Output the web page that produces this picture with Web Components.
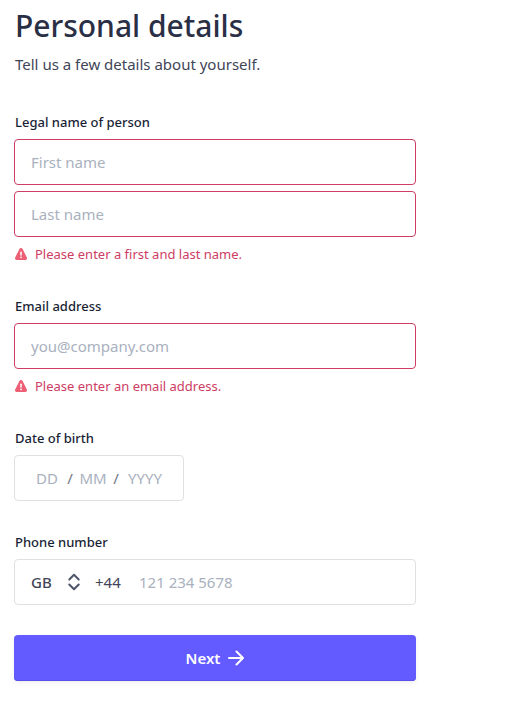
<!DOCTYPE html>
<html lang="en">
<head>
<meta charset="utf-8">
<meta name="viewport" content="width=device-width, initial-scale=1">
<title>Personal details</title>
<style>
  body {
    margin: 0;
    background: #fff;
    font-family: "Noto Sans", "Open Sans", sans-serif;
    --ink: #1a1f36;
    --text: #414558;
    --placeholder: #a9b1be;
    --line: #e0e0e3;
    --error: #cd3d64;
    --accent: #635bff;
  }
</style>
</head>
<body>
<details-page>
  <page-heading>
    Personal details
    <span slot="intro">Tell us a few details about yourself.</span>
  </page-heading>
  <text-field label="Legal name of person" placeholders="First name|Last name" type="text">
    <field-error slot="error">Please enter a first and last name.</field-error>
  </text-field>
  <text-field label="Email address" placeholders="you@company.com" type="email">
    <field-error slot="error">Please enter an email address.</field-error>
  </text-field>
  <date-field label="Date of birth"></date-field>
  <phone-field label="Phone number"></phone-field>
  <next-button>Next</next-button>
</details-page>

<script>
const fieldStyles = `
  :host { display: block; }
  * { box-sizing: border-box; }
  label { display: block; margin-bottom: 7px; padding-left: 1px; font-size: 13px; line-height: 20px; font-weight: 500; color: var(--ink); }
  input, select { font: inherit; font-size: 15px; line-height: 24px; color: var(--text); border: 0; background: none; margin: 0; padding: 0; min-width: 0; outline: 0; }
  input::placeholder { color: var(--placeholder); opacity: 1; }
  .box { display: flex; align-items: center; height: 46px; border: 1px solid var(--line); border-radius: 4px; padding: 0 16px; }
  .box:focus-within { box-shadow: 0 0 0 3px #635bff33; }
`;

class ShadowElement extends HTMLElement {
  connectedCallback() {
    if (this.shadowRoot) return;
    this.attachShadow({ mode: "open" }).innerHTML = this.render();
  }
}

customElements.define("details-page", class extends ShadowElement {
  render() {
    return `<style>
      :host { display: block; padding: 6px 14px 40px; }
      form { display: flex; flex-direction: column; gap: 31px; max-width: 402px; }
    </style><form novalidate><slot></slot></form>`;
  }
});

customElements.define("page-heading", class extends ShadowElement {
  render() {
    return `<style>
      :host { display: block; padding: 0 0 5px 1px; }
      h1 { margin: 0 0 6px; font-size: 30px; line-height: 40px; font-weight: 500; color: #2a2f45; }
      p { margin: 0; font-size: 15px; line-height: 24px; color: var(--text); }
    </style><h1><slot></slot></h1><p><slot name="intro"></slot></p>`;
  }
});

customElements.define("text-field", class extends ShadowElement {
  render() {
    const inputs = this.getAttribute("placeholders").split("|").map((p, i) =>
      `<div class="box"><input ${i ? `aria-label="${p}"` : 'id="control"'} type="${this.getAttribute("type")}" placeholder="${p}" aria-invalid="true"></div>`).join("");
    return `<style>${fieldStyles}
      .stack { display: grid; gap: 6px; }
      .box { border-color: var(--error); }
      input { flex: 1; }
    </style><label for="control">${this.getAttribute("label")}</label>
    <div class="stack">${inputs}<slot name="error"></slot></div>`;
  }
});

customElements.define("field-error", class extends ShadowElement {
  render() {
    return `<style>
      :host { display: flex; align-items: center; gap: 8px; padding-left: 1px; font-size: 13px; line-height: 22px; color: var(--error); }
      svg { flex: none; }
    </style><svg width="12" height="12" viewBox="0 0 12 12" aria-hidden="true">
      <path d="M4.400 1a1.800 1.800 0 0 1 3.200 0l4.200 8.500A1.700 1.700 0 0 1 10.300 12H1.700A1.700 1.700 0 0 1 .2 9.500z" fill="#ed5f74"/>
      <path d="M6 4.200v2.800" stroke="#fff" stroke-width="1.500" stroke-linecap="round"/><circle cx="6" cy="9.300" r=".9" fill="#fff"/>
    </svg><span role="alert"><slot></slot></span>`;
  }
});

customElements.define("date-field", class extends ShadowElement {
  render() {
    return `<style>${fieldStyles}
      .box { display: inline-flex; vertical-align: top; padding: 0 14px; color: #6f7686; font-size: 15px; }
      input { text-align: center; }
      .day, .month { width: 36px; }
      .year { width: 48px; }
      span { width: 10px; text-align: center; }
    </style><label for="day">${this.getAttribute("label")}</label>
    <div class="box"><input class="day" id="day" inputmode="numeric" maxlength="2" placeholder="DD"><span>/</span><input class="month" aria-label="Month" inputmode="numeric" maxlength="2" placeholder="MM"><span>/</span><input class="year" aria-label="Year" inputmode="numeric" maxlength="4" placeholder="YYYY"></div>`;
  }
});

customElements.define("phone-field", class extends ShadowElement {
  render() {
    return `<style>${fieldStyles}
      .country { display: grid; align-items: center; width: 49px; margin-right: 15px; }
      select, svg { grid-area: 1 / 1; }
      select { appearance: none; width: 100%; font-weight: 500; }
      svg { justify-self: end; pointer-events: none; }
      .code { width: 44px; font-size: 15px; line-height: 24px; color: var(--text); }
      #phone { flex: 1; }
    </style><label for="phone">${this.getAttribute("label")}</label>
    <div class="box">
      <div class="country"><select aria-label="Country"><option>GB</option></select>
        <svg width="12" height="18" viewBox="0 0 12 18" fill="none" stroke="#4f566b" stroke-width="2" stroke-linecap="round" stroke-linejoin="round" aria-hidden="true"><path d="M1.300 6.500 6 1.800l4.700 4.700M1.300 11.500 6 16.200l4.700-4.700"/></svg></div>
      <span class="code">+44</span>
      <input id="phone" type="tel" placeholder="121 234 5678">
    </div>`;
  }
});

customElements.define("next-button", class extends ShadowElement {
  render() {
    return `<style>
      :host { display: block; margin-top: -1px; }
      button { display: flex; align-items: center; justify-content: center; gap: 8px; width: 100%; height: 46px; border: 0; border-radius: 4px; background: var(--accent); color: #fff; font: inherit; font-size: 15px; line-height: 24px; font-weight: 600; box-shadow: inset 0 -1px #574fe6, 0 2px 4px #3c425714; cursor: pointer; }
    </style><button type="button"><slot></slot>
      <svg width="16" height="16" viewBox="0 0 16 16" fill="none" stroke="#fff" stroke-width="2" stroke-linecap="round" stroke-linejoin="round" aria-hidden="true"><path d="M1 8h14M8.500 1.500 15 8l-6.500 6.500"/></svg></button>`;
  }
});
</script>
</body>
</html>
